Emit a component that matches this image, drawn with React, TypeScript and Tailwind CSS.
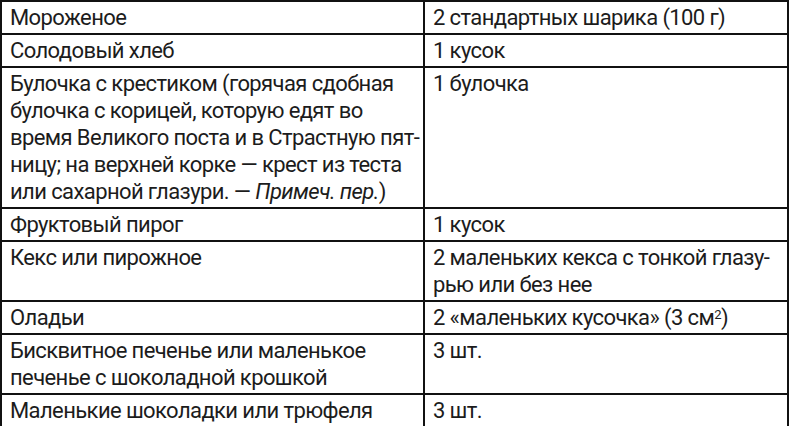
import React from 'react';

type Row = { item: React.ReactNode; portion: React.ReactNode };

const rows: Row[] = [
  { item: 'Мороженое', portion: '2 стандартных шарика (100 г)' },
  { item: 'Солодовый хлеб', portion: '1 кусок' },
  {
    item: (
      <>
        Булочка с крестиком (горячая сдобная
        <br />
        булочка с корицей, которую едят во
        <br />
        время Великого поста и в Страстную пят-
        <br />
        ницу; на верхней корке — крест из теста
        <br />
        или сахарной глазури. — <i>Примеч. пер.</i>)
      </>
    ),
    portion: '1 булочка',
  },
  { item: 'Фруктовый пирог', portion: '1 кусок' },
  {
    item: 'Кекс или пирожное',
    portion: (
      <>
        2 маленьких кекса с тонкой глазу-
        <br />
        рью или без нее
      </>
    ),
  },
  {
    item: 'Оладьи',
    portion: (
      <>
        2 «маленьких кусочка» (3 см<sup className="text-[13px]">2</sup>)
      </>
    ),
  },
  {
    item: (
      <>
        Бисквитное печенье или маленькое
        <br />
        печенье с шоколадной крошкой
      </>
    ),
    portion: '3 шт.',
  },
  { item: 'Маленькие шоколадки или трюфеля', portion: '3 шт.' },
];

export default function App() {
  return (
    <div className="w-[790px] h-[426px] bg-white overflow-hidden">
      <table
        className="w-[789px] table-fixed border-collapse text-[#1c1c1c] text-[22px] leading-[27px] tracking-[-0.6px]"
        style={{ fontFamily: 'Roboto, "Noto Sans", sans-serif' }}
      >
        <colgroup>
          <col className="w-[423px]" />
          <col />
        </colgroup>
        <tbody>
          {rows.map((r, i) => (
            <tr key={i}>
              <td className="border-2 border-[#111] align-top whitespace-nowrap px-2 py-[2px]">{r.item}</td>
              <td className="border-2 border-[#111] align-top whitespace-nowrap px-2 py-[2px]">{r.portion}</td>
            </tr>
          ))}
        </tbody>
      </table>
    </div>
  );
}
